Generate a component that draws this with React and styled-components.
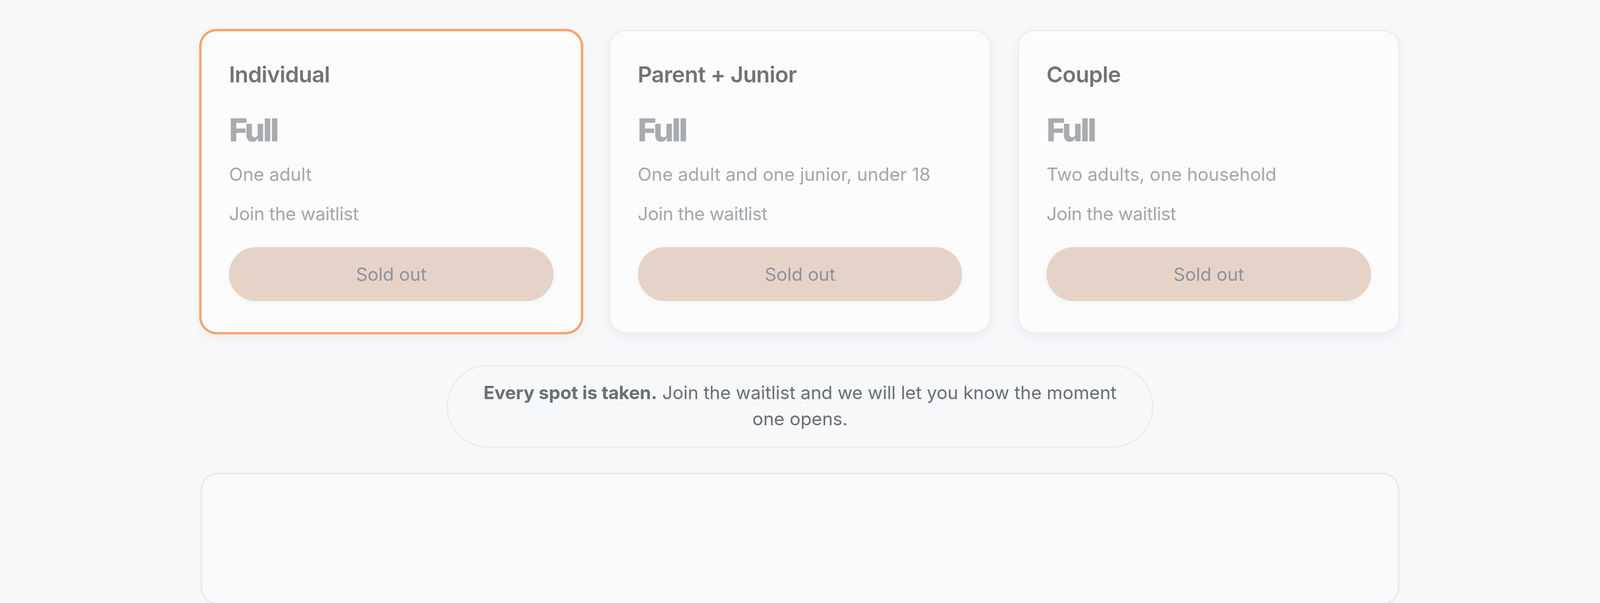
import React from 'react'
import styled, { createGlobalStyle } from 'styled-components'

// sizes are given in pixels of a 5120px wide page and turned into vw
const v = (px) => `${+(px / 51.2).toFixed(4)}vw`

const GlobalStyle = createGlobalStyle`
  html, body {
    margin: 0;
    padding: 0;
    background: #f7f8fa;
  }
  body {
    font-family: Inter, "Noto Sans", "Liberation Sans", sans-serif;
    -webkit-font-smoothing: antialiased;
  }
`

const Page = styled.div`
  display: flex;
  flex-direction: column;
  align-items: center;
  padding-top: ${v(96)};
`

const PlanGrid = styled.div`
  display: grid;
  grid-template-columns: repeat(3, ${v(1222)});
  gap: ${v(86)};
`

const PlanCard = styled.div`
  display: flex;
  flex-direction: column;
  box-sizing: border-box;
  padding: ${v(97)} ${v(88)} ${v(99)};
  background: #fcfcfc;
  border: ${v(4)} solid ${(p) => (p.selected ? '#f9a470' : '#ececef')};
  border-radius: ${v(52)};
  box-shadow: ${(p) =>
    p.selected
      ? `0 0 0 ${v(4)} #f9a470, 0 ${v(14)} ${v(40)} rgba(30, 40, 60, 0.05)`
      : `0 ${v(14)} ${v(40)} rgba(30, 40, 60, 0.05)`};
`

const PlanName = styled.div`
  font-size: ${v(71)};
  line-height: 1.2;
  font-weight: 600;
  letter-spacing: -0.015em;
  color: #727375;
`

const Price = styled.div`
  margin-top: ${v(78)};
  font-size: ${v(102)};
  line-height: 1.1;
  font-weight: 800;
  letter-spacing: -0.06em;
  color: #a8abb0;
`

const Detail = styled.div`
  margin-top: ${(p) => v(p.gap)};
  font-size: ${v(58)};
  line-height: 1.4;
  font-weight: 400;
  letter-spacing: ${(p) => (p.tight ? '-0.012em' : '0')};
  color: #a4a7ac;
`

const SoldOutButton = styled.button`
  margin-top: ${v(66)};
  height: ${v(172)};
  width: 100%;
  border: none;
  border-radius: 999px;
  background: #e6d3c8;
  color: #909398;
  font-family: inherit;
  font-size: ${v(58)};
  font-weight: 400;
  box-shadow: 0 ${v(6)} ${v(18)} rgba(120, 80, 60, 0.05);
  cursor: not-allowed;
`

const Notice = styled.div`
  margin-top: ${v(102)};
  width: ${v(2261)};
  box-sizing: border-box;
  padding: ${v(44)} ${v(70)} ${v(47)};
  border: ${v(3)} solid #e3e5e9;
  border-radius: 999px;
  text-align: center;
  font-size: ${v(58)};
  line-height: ${v(84)};
  color: #6b6f78;

  strong {
    font-weight: 700;
  }
`

const NextSection = styled.div`
  margin-top: ${v(82)};
  width: ${v(3834)};
  height: ${v(420)};
  box-sizing: border-box;
  border: ${v(4)} solid #e3e5e9;
  border-radius: ${v(52)};
  background: #f8f9fb;
`

const plans = [
  { name: 'Individual', detail: 'One adult', selected: true },
  { name: 'Parent + Junior', detail: 'One adult and one junior, under 18' },
  { name: 'Couple', detail: 'Two adults, one household' },
]

const App = () => {
  return (
    <>
      <GlobalStyle />
      <Page>
        <PlanGrid>
          {plans.map((plan) => (
            <PlanCard key={plan.name} selected={plan.selected}>
              <PlanName>{plan.name}</PlanName>
              <Price>Full</Price>
              <Detail gap={46}>{plan.detail}</Detail>
              <Detail gap={45} tight>
                Join the waitlist
              </Detail>
              <SoldOutButton disabled>Sold out</SoldOutButton>
            </PlanCard>
          ))}
        </PlanGrid>
        <Notice>
          <strong>Every spot is taken.</strong> Join the waitlist and we will let you know the moment
          <br />
          one opens.
        </Notice>
        <NextSection />
      </Page>
    </>
  )
}

export default App
